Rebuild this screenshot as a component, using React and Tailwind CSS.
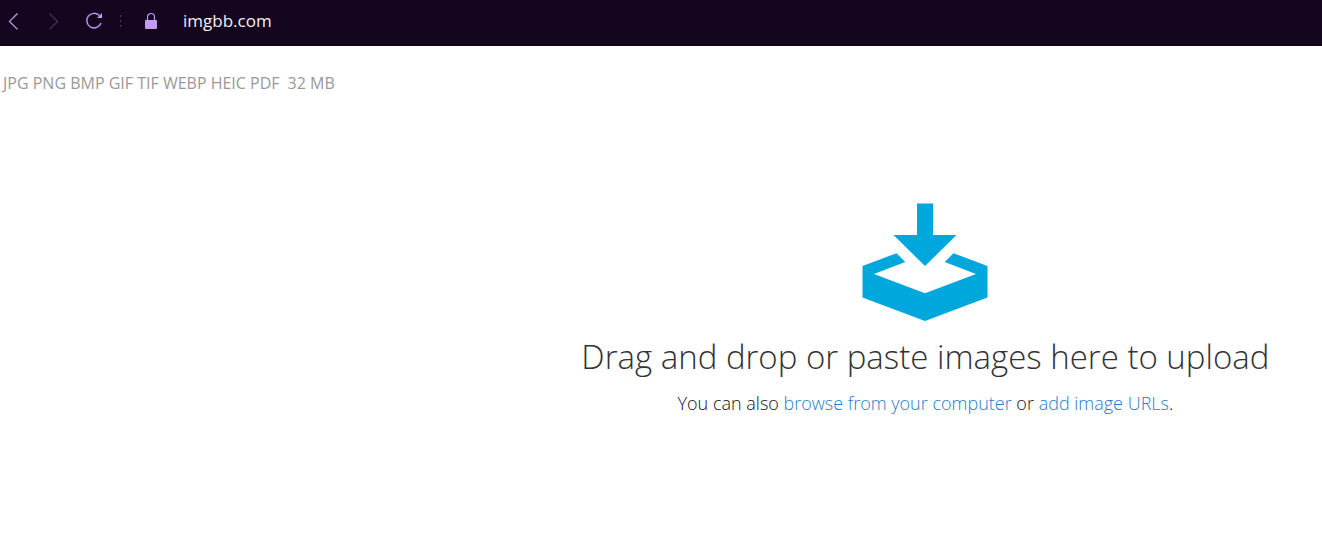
function BrowserBar() {
  return (
    <header className="flex h-[46px] items-center border-b-2 border-[#11041b] bg-[#150620] pb-[2px] text-[#c39bf0]">
      <button type="button" aria-label="Back" className="ml-[6px] h-5 w-4">
        <svg viewBox="0 0 16 20" className="h-5 w-4" fill="none" stroke="currentColor" strokeWidth="1.3">
          <path d="M11.5 2.500 3.500 10.400l8 8" />
        </svg>
      </button>
      <button type="button" aria-label="Forward" disabled className="ml-[24px] h-5 w-4 text-[#4a2e62]">
        <svg viewBox="0 0 16 20" className="h-5 w-4" fill="none" stroke="currentColor" strokeWidth="1.3">
          <path d="M3.500 2.500l8 7.900-8 8" />
        </svg>
      </button>
      <button type="button" aria-label="Reload" className="ml-[22px] h-5 w-5">
        <svg viewBox="0 0 20 20" className="h-5 w-5" fill="none">
          <path d="M15.400 4.600A7.300 7.300 0 1 0 17 12" stroke="currentColor" strokeWidth="1.4" />
          <path d="M18 2v5h-5z" fill="currentColor" />
        </svg>
      </button>
      <svg viewBox="0 0 4 20" className="ml-[15px] h-5 w-1" fill="#4a3f58" aria-hidden="true">
        <path d="M1 4h1v2H1zM1 9h1v2H1zM1 14h1v2H1z" />
      </svg>
      <svg viewBox="0 0 14 20" className="ml-[21px] h-5 w-[14px]" aria-hidden="true">
        <path d="M3.500 9.500V6a3.500 3.500 0 0 1 7 0V9.500" fill="none" stroke="currentColor" strokeWidth="1.2" />
        <rect x="1" y="9" width="12" height="9" rx="1" fill="currentColor" />
      </svg>
      <span className="ml-[25px] text-[17px] leading-5 text-[#f1eef4]">imgbb.com</span>
    </header>
  );
}

function UploadIcon() {
  return (
    <svg viewBox="0 0 126 118" className="h-[118px] w-[126px]" fill="#00a7dd" aria-hidden="true">
      <path d="M55 .5h16V32h23.500L63 63 31.500 32H55z" />
      <path d="M.5 63 34.500 50.200l8.800 8.700L12 71l51 19.300L114 71 82.700 58.900l8.800-8.700L125.500 63v31.500L63 118 .5 94.500z" />
    </svg>
  );
}

export default function App() {
  return (
    <div className="min-h-screen overflow-hidden bg-white font-['Open_Sans',sans-serif]">
      <BrowserBar />
      <p className="flex gap-2 px-[3px] pt-[25px] text-[16px] leading-6 text-[#999999]">
        <span>JPG PNG BMP GIF TIF WEBP HEIC PDF</span>
        <span>32 MB</span>
      </p>
      <main className="ml-[40%] flex flex-col items-center pt-[108px] text-[#333333]">
        <UploadIcon />
        <h1 className="mt-[12px] whitespace-nowrap text-[33px] font-light leading-[48px]">
          Drag and drop or paste images here to upload
        </h1>
        <p className="mt-[10px] whitespace-nowrap text-[18px] font-light leading-6 text-[#111111]">
          You can also <a href="#browse" className="text-[#1f7ccb]">browse from your computer</a> or{" "}
          <a href="#urls" className="text-[#1f7ccb]">add image URLs</a>.
        </p>
      </main>
    </div>
  );
}
